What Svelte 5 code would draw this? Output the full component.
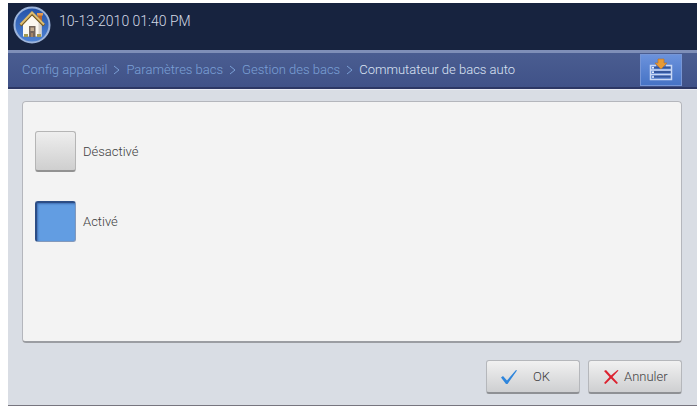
<script>
	const parents = ['Config appareil', 'Paramètres bacs', 'Gestion des bacs'];
	const options = [
		{ value: 'off', label: 'Désactivé' },
		{ value: 'on', label: 'Activé' }
	];

	let selected = 'on';
</script>

<div class="device">
	<header>
		<button class="home" type="button" aria-label="Accueil">
			<svg viewBox="0 0 38 38" width="38" height="38">
				<defs>
					<linearGradient id="disc" x1="0" y1="0" x2="0" y2="1">
						<stop offset="0" stop-color="#2452a8" />
						<stop offset="1" stop-color="#4e83d4" />
					</linearGradient>
				</defs>
				<circle cx="19" cy="19" r="17.5" fill="url(#disc)" stroke="#9db4da" stroke-width="2" />
				<path d="M25 8h4v8l-4-4z" fill="#b9662d" />
				<path d="M24 7h6v2.500h-6z" fill="#e39a52" />
				<path d="M10 18 19 9l9.500 9v12.500H10z" fill="#fbf8f0" />
				<path d="M25.500 16l3 3v11.500h-3z" fill="#d9d4cb" />
				<path d="M7.500 19.500 19 7.500l12 12" fill="none" stroke="#76591f" stroke-width="3" />
				<path d="M7.500 18.500 19 6.500l12 12" fill="none" stroke="#dcbd70" stroke-width="2" />
				<path d="M16 20h6.500v11H16z" fill="#75675d" />
				<path d="M17.500 21.500h3.500v3.500h-3.500z" fill="#c3ad91" />
				<path d="M18 27h2v4h-2z" fill="#a38468" />
				<path d="M11 28h4v3h-4zM24 28h4v3h-4z" fill="#a49b52" />
			</svg>
		</button>
		<time datetime="2010-10-13T13:40">10-13-2010 01:40 PM</time>
	</header>

	<nav>
		<div class="crumbs">
			{#each parents as name}
				<a href="#top">{name}</a>
				<svg viewBox="0 0 7 10" width="7" height="10" aria-hidden="true">
					<path d="M1 1l5 4-5 4" fill="none" stroke="currentColor" />
				</svg>
			{/each}
			<strong>Commutateur de bacs auto</strong>
		</div>
		<button class="status" type="button" aria-label="État des travaux">
			<svg viewBox="0 0 24 24" width="24" height="24">
				<path d="M5 9.500h17M5 14h17M5 18.500h17" stroke="#34569c" stroke-width="2" />
				<path
					d="M7 7.500H1.500v14h21v-14H17M1.500 12h21M1.500 16.500h21"
					fill="none"
					stroke="#c9d8f4"
					stroke-width="1.500"
				/>
				<path d="M3 9.700h2M3 14.200h2M3 19h2" stroke="#e6edfa" stroke-width="1.500" />
				<path d="M9 1h6v4h3l-6 6-6-6h3z" fill="#e79a35" stroke="#b77631" stroke-width=".7" />
			</svg>
		</button>
	</nav>

	<main>
		<fieldset aria-label="Commutateur de bacs auto">
			{#each options as option}
				<label>
					<input type="radio" name="switch" value={option.value} bind:group={selected} />
					{option.label}
				</label>
			{/each}
		</fieldset>

		<div class="actions">
			<button class="action ok" type="button">
				<svg viewBox="0 0 18 16" width="18" height="16">
					<path d="M1 8.500 3 7l4 4.500L16 1l1 .5L7.500 15H6z" fill="#2f86dc" />
				</svg>
				OK
			</button>
			<button class="action cancel" type="button">
				<svg viewBox="0 0 16 16" width="16" height="16">
					<path
						d="M1 2 3 1l5 5.500L14.500 1l1 .5L9.500 8l5.500 6-1.500 1L8 9.500 2.500 15 1 14l5.500-6z"
						fill="#dc2230"
					/>
				</svg>
				Annuler
			</button>
		</div>
	</main>
</div>

<style>
	:global(body) {
		background: #fff;
	}

	.device {
		margin: 3px 1px 3px 8px;
		border-bottom: 1px solid #77757f;
		background: #d9dde4;
		color: #3e3e41;
		font: 300 13px/16px Roboto, 'Liberation Sans', sans-serif;
	}

	button {
		display: flex;
		align-items: center;
		margin: 0;
		padding: 0;
		font: inherit;
		color: inherit;
		cursor: pointer;
	}

	header {
		display: flex;
		align-items: flex-start;
		gap: 8px;
		height: 44px;
		padding: 3px 5px 0;
		background: #17233f;
		color: #d3d9e5;
	}

	.home {
		border: none;
		border-radius: 50%;
		background: none;
	}

	time {
		padding-top: 7px;
		font-size: 14px;
	}

	nav {
		display: flex;
		align-items: center;
		justify-content: space-between;
		height: 34px;
		padding: 0 15px 0 14px;
		border-top: 3px solid #7f8fb8;
		border-bottom: 2px solid #2c3764;
		background: linear-gradient(#4a5d91, #405288);
	}

	.crumbs {
		display: flex;
		align-items: center;
		gap: 6px;
		color: #7ba0d6;
		white-space: nowrap;
	}

	.crumbs a {
		color: inherit;
		text-decoration: none;
	}

	.crumbs strong {
		color: #dce4f4;
		font-weight: 300;
	}

	.status {
		justify-content: center;
		width: 42px;
		height: 32px;
		border: 1px solid #7796d6;
		background: linear-gradient(#6b92dc, #4673c5);
	}

	main {
		padding: 11px 15px 11px 14px;
		border-top: 1px solid #e8ebf2;
	}

	fieldset {
		display: flex;
		flex-direction: column;
		gap: 29px;
		min-width: 0;
		min-height: 210px;
		margin: 0;
		padding: 29px 12px 0;
		border: 1px solid #b4b6bc;
		border-bottom: 2px solid #9b9da2;
		border-radius: 4px;
		background: #f3f3f3;
	}

	label {
		display: flex;
		align-items: center;
		gap: 7px;
	}

	input {
		appearance: none;
		width: 41px;
		height: 41px;
		margin: 0;
		border: 1px solid #b5b5b5;
		border-bottom: 2px solid #929292;
		border-radius: 3px;
		background: linear-gradient(#eee, #cfcfcf);
	}

	input:checked {
		border: 1px solid #8399bb;
		border-top: 2px solid #2c4d85;
		border-left: 2px solid #2c4d85;
		background: #629de2;
		box-shadow: inset 1px 1px 2px #3d6eb4;
	}

	.actions {
		display: flex;
		justify-content: flex-end;
		gap: 8px;
		margin-top: 17px;
	}

	.action {
		width: 94px;
		height: 34px;
		border: 1px solid #b5b7bb;
		border-bottom: 2px solid #8e9094;
		border-radius: 3px;
		background: linear-gradient(#f1f1f1, #cecfd1);
	}

	.ok {
		gap: 15px;
		padding-left: 13px;
	}

	.cancel {
		gap: 5px;
		padding-left: 14px;
	}
</style>
